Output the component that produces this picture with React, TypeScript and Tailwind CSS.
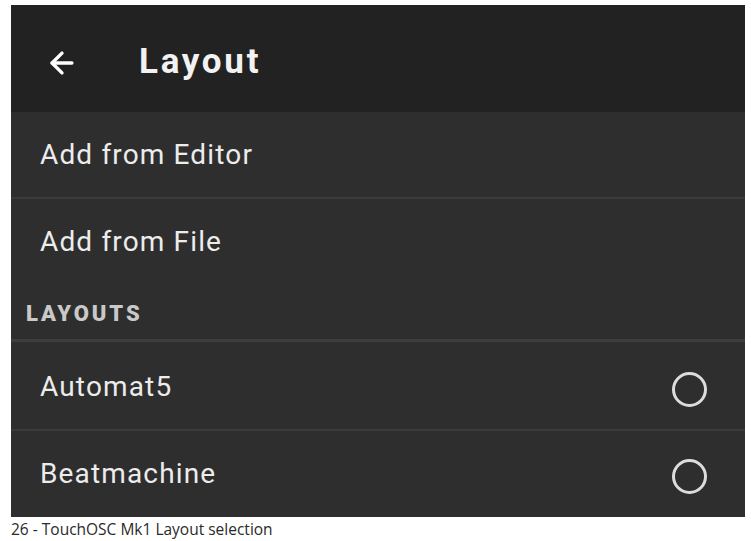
import { ArrowLeft } from "lucide-react";

interface RowProps {
  label: string;
  radio?: boolean;
  divider?: boolean;
  height: string;
}

function Row({ label, radio, divider, height }: RowProps) {
  return (
    <div
      className={`flex items-center justify-between pl-[29px] pr-[38px] ${height} ${
        divider ? "border-b-2 border-[#3b3b3b]" : ""
      }`}
    >
      <span className="text-[28px] tracking-[1.15px] text-[#ececec]">{label}</span>
      {radio && (
        <span className="mt-[5px] h-[35px] w-[35px] rounded-full border-[3px] border-[#dcdcdc]" />
      )}
    </div>
  );
}

export default function App() {
  return (
    <div className="min-h-[541px] w-[751px] bg-white font-['Roboto',sans-serif]">
      <div className="ml-[11px] w-[734px] pt-[5px]">
        <div className="flex h-[107px] items-center bg-[#222222] pt-[8px]">
          <ArrowLeft
            className="ml-[34px] text-white"
            size={34}
            strokeWidth={2.4}
          />
          <h1 className="ml-[60px] text-[35px] font-bold tracking-[2.7px] text-[#f2f2f2]">
            Layout
          </h1>
        </div>
        <div className="bg-[#2e2e2e]">
          <Row label="Add from Editor" divider height="h-[87px]" />
          <Row label="Add from File" height="h-[86px]" />
          <div className="flex h-[57px] items-center border-b-[3px] border-[#3e3e3e] pl-[15px] pt-[2px]">
            <span className="text-[22px] font-black tracking-[2.9px] text-[#c9c9c9]">
              LAYOUTS
            </span>
          </div>
          <Row label="Automat5" radio divider height="h-[89px] pt-[3px]" />
          <Row label="Beatmachine" radio height="h-[86px]" />
        </div>
      </div>
      <p className="ml-[11px] mt-[2px] font-['Open_Sans',sans-serif] text-[15.5px] leading-[20px] text-[#2a2a2a]">
        26 - TouchOSC Mk1 Layout selection
      </p>
    </div>
  );
}
